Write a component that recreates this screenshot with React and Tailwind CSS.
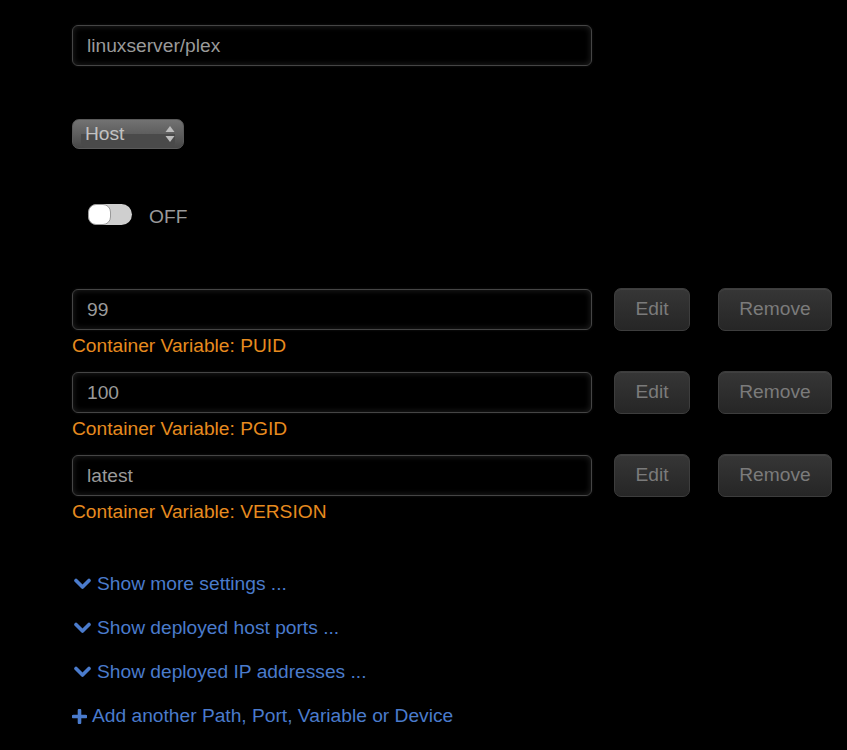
import React, { useState } from "react";

const variables = [
  { value: "99", name: "PUID" },
  { value: "100", name: "PGID" },
  { value: "latest", name: "VERSION" },
];

const links = [
  "Show more settings ...",
  "Show deployed host ports ...",
  "Show deployed IP addresses ...",
];

const inputCls =
  "w-[520px] h-[41px] shrink-0 rounded-[6px] border border-[#454545] bg-black px-[14px] text-[19.2px] text-[#9a9a9a] outline-none shadow-[inset_0_0_6px_rgba(255,255,255,0.14),0_0_3px_rgba(255,255,255,0.08)]";

const btnCls =
  "h-[43px] rounded-[7px] border border-[#3d3d3d] bg-gradient-to-b from-[#363636] to-[#262626] text-[19.2px] text-[#7b7b7b] shadow-[inset_0_1px_0_rgba(255,255,255,0.06)]";

function Chevron() {
  return (
    <svg width="17" height="12" viewBox="0 0 17 12" className="shrink-0">
      <path d="M2 2.5 L8.5 9 L15 2.5" fill="none" stroke="#4a7bcc" strokeWidth="3.6" strokeLinecap="round" strokeLinejoin="round" />
    </svg>
  );
}

function Plus() {
  return (
    <svg width="15" height="15" viewBox="0 0 15 15" className="shrink-0">
      <path d="M7.5 1.5 V13.5 M1.5 7.5 H13.5" fill="none" stroke="#4a7bcc" strokeWidth="3.6" strokeLinecap="round" />
    </svg>
  );
}

export default function App() {
  const [on, setOn] = useState(false);

  return (
    <div
      className="min-h-[750px] w-full bg-black pl-[72px] pt-[25px]"
      style={{ fontFamily: '"Liberation Sans", Arial, sans-serif' }}
    >
      {/* repository */}
      <input className={inputCls} defaultValue="linuxserver/plex" />

      {/* network type */}
      <div className="mt-[53px] relative w-[112px] h-[30px] rounded-[7px] overflow-hidden border border-[#5a5a5a] bg-gradient-to-b from-[#727272] via-[#5e5e5e] to-[#474747] shadow-[0_1px_2px_rgba(0,0,0,0.6)]">
        <div className="absolute inset-x-[8px] bottom-0 h-[14px] rounded-b-[6px] bg-[#4a4a4a]" />
        <div className="relative flex h-full items-center justify-between pl-[12px] pr-[8px]">
          <span className="text-[19.2px] leading-none text-[#c2c2c2]">Host</span>
          <svg width="10" height="18" viewBox="0 0 10 18">
            <path d="M5 1 L9.5 7 H0.5 Z" fill="#bdbdbd" />
            <path d="M5 17 L9.5 11 H0.5 Z" fill="#bdbdbd" />
          </svg>
        </div>
      </div>

      {/* privileged */}
      <div className="mt-[55px] ml-[16px] flex h-[21px] items-center gap-[17px]">
        <button
          onClick={() => setOn(!on)}
          className="relative h-[21px] w-[44px] rounded-full bg-[#cfcfcf]"
        >
          <span className="absolute left-0 top-0 h-[21px] w-[23px] rounded-[8px] border border-[#9a9a9a] bg-white" />
        </button>
        <span className="mt-[5px] text-[19.2px] text-[#9a9a9a]">{on ? "ON" : "OFF"}</span>
      </div>

      {/* variables */}
      <div className="mt-[63px] flex flex-col gap-[13px]">
        {variables.map((v) => (
          <div key={v.name}>
            <div className="flex items-center">
              <input className={inputCls} defaultValue={v.value} />
              <button className={`${btnCls} ml-[22px] w-[76px]`}>Edit</button>
              <button className={`${btnCls} ml-[28px] w-[114px]`}>Remove</button>
            </div>
            <div className="mt-[3px] text-[19.2px] leading-[24px] text-[#e78b1f]">
              Container Variable: {v.name}
            </div>
          </div>
        ))}
      </div>

      {/* links */}
      <div className="mt-[38px] flex flex-col text-[19.2px] text-[#4a7bcc]">
        {links.map((l) => (
          <a key={l} className="flex h-[44px] items-center gap-[6px] pl-[2px]">
            <Chevron />
            <span>{l}</span>
          </a>
        ))}
        <a className="flex h-[44px] items-center gap-[5px]">
          <Plus />
          <span>Add another Path, Port, Variable or Device</span>
        </a>
      </div>
    </div>
  );
}
